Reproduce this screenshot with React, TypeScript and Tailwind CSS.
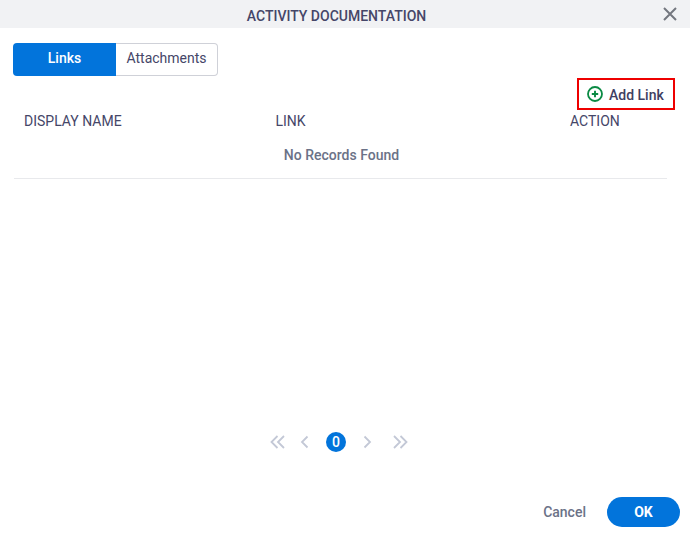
import React from "react";

function Chevrons({ double, flip }: { double?: boolean; flip?: boolean }) {
  return (
    <svg width="16" height="16" viewBox="0 0 16 16" fill="none" stroke="#c3c8d6" strokeWidth="1.8" className={flip ? "-scale-x-100" : ""}>
      {double ? (
        <>
          <path d="M7.5 2 L1.5 8 L7.5 14" />
          <path d="M14 2 L8 8 L14 14" />
        </>
      ) : (
        <path d="M11.5 2.5 L6 8 L11.5 13.5" />
      )}
    </svg>
  );
}

export default function App() {
  return (
    <div className="w-[690px] h-[535px] bg-white flex flex-col font-['Roboto',sans-serif] overflow-hidden">
      <div className="h-[28px] shrink-0 bg-[#f1f2f4] relative flex items-center justify-center pr-[17px]">
        <span className="text-sm font-medium text-[#454668] pt-[3px]">ACTIVITY DOCUMENTATION</span>
        <svg className="absolute right-[13px] top-[7px]" width="14" height="14" viewBox="0 0 14 14" fill="none" stroke="#74777f" strokeWidth="2">
          <path d="M1 1 L13 13 M13 1 L1 13" />
        </svg>
      </div>

      <div className="px-[13px] pt-[15px] flex">
        <div className="h-[33px] w-[103px] pb-[3px] bg-[#0274db] rounded-l-[4px] flex items-center justify-center text-white text-sm font-medium">Links</div>
        <div className="h-[33px] w-[102px] pb-[3px] border border-l-0 border-[#cfd1d8] rounded-r-[4px] flex items-center justify-center text-[#454668] text-sm">Attachments</div>
      </div>

      <div className="flex justify-end pr-[15px] mt-[2px]">
        <div className="h-[32px] w-[98px] border-[2px] border-[#ee0000] flex items-center pl-[8px] gap-[6px]">
          <svg width="16" height="16" viewBox="0 0 16 16" fill="none" stroke="#0a8a43">
            <circle cx="8" cy="8" r="7" strokeWidth="1.8" />
            <path d="M8 4.8 V11.2 M4.8 8 H11.2" strokeWidth="1.9" />
          </svg>
          <span className="text-sm font-medium text-[#3f4062] pt-[2px]">Add Link</span>
        </div>
      </div>

      <div className="ml-[14px] mr-[23px] h-[69px] border-b border-[#e8e9ec] flex flex-col">
        <div className="grid grid-cols-[251.5px_294.5px_1fr] pl-[10px] h-[22px] items-center text-sm text-[#454668]">
          <span>DISPLAY NAME</span>
          <span className="whitespace-nowrap">LINK</span>
          <span className="whitespace-nowrap">ACTION</span>
        </div>
        <div className="text-center text-sm font-medium text-[#6b7287] mt-[13px] pl-[2px]">No Records Found</div>
      </div>

      <div className="mt-[252px] flex items-center justify-center h-[22px] pr-[12px]">
        <Chevrons double />
        <div className="w-[10px]" />
        <Chevrons />
        <div className="w-[14px]" />
        <div className="w-5 h-5 rounded-full bg-[#0274db] text-white text-sm font-medium flex items-center justify-center">0</div>
        <div className="w-[14px]" />
        <Chevrons flip />
        <div className="w-[16px]" />
        <Chevrons double flip />
      </div>

      <div className="flex justify-end items-center pr-[10px] mt-[44px]">
        <span className="text-sm font-medium text-[#6b7287] mr-[21px]">Cancel</span>
        <div className="w-[73px] h-[30px] rounded-full bg-[#0274db] text-white text-sm font-bold flex items-center justify-center">OK</div>
      </div>
    </div>
  );
}
